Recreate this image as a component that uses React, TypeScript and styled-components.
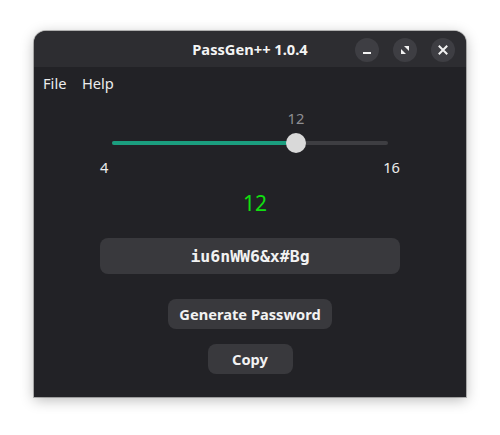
import React from "react";
import styled, { createGlobalStyle } from "styled-components";

const MIN = 4;
const MAX = 16;
const VALUE = 12;

function App() {
  const ratio = (VALUE - MIN) / (MAX - MIN);

  return (
    <>
      <GlobalStyle />
      <Page>
        <Window>
          <TitleBar>
            <Title>PassGen++ 1.0.4</Title>
            <Controls>
              <ControlButton>
                <svg width="10" height="10" viewBox="0 0 10 10">
                  <rect x="1" y="7" width="8" height="2" fill="#f2f2f2" />
                </svg>
              </ControlButton>
              <ControlButton>
                <svg width="10" height="10" viewBox="0 0 10 10">
                  <polygon points="4,1 9,1 9,6" fill="#f2f2f2" />
                  <polygon points="1,4 6,9 1,9" fill="#f2f2f2" />
                </svg>
              </ControlButton>
              <ControlButton>
                <svg width="10" height="10" viewBox="0 0 10 10">
                  <path
                    d="M1.5 1.5 L8.5 8.5 M8.5 1.5 L1.5 8.5"
                    stroke="#f2f2f2"
                    strokeWidth="2"
                    strokeLinecap="square"
                  />
                </svg>
              </ControlButton>
            </Controls>
          </TitleBar>

          <Body>
            <MenuBar>
              <MenuItem>File</MenuItem>
              <MenuItem>Help</MenuItem>
            </MenuBar>

            <SliderBlock>
              <ValueRow>
                <ValueLabel style={{ left: `${ratio * 100}%` }}>{VALUE}</ValueLabel>
              </ValueRow>
              <Track>
                <Fill style={{ width: `${ratio * 100}%` }} />
                <Thumb style={{ left: `${ratio * 100}%` }} />
              </Track>
              <RangeLabels>
                <span>{MIN}</span>
                <span>{MAX}</span>
              </RangeLabels>
            </SliderBlock>

            <LengthValue>{VALUE}</LengthValue>

            <PasswordBox>iu6nWW6&amp;x#Bg</PasswordBox>

            <Button $top={25} $width={164}>
              Generate Password
            </Button>
            <Button $top={15} $width={85}>
              Copy
            </Button>
          </Body>
        </Window>
      </Page>
    </>
  );
}

export default App;

const GlobalStyle = createGlobalStyle`
  body {
    margin: 0;
    background: #ffffff;
    font-family: "Noto Sans", "Open Sans", sans-serif;
  }
`;

const Page = styled.div`
  width: 500px;
  height: 435px;
  padding: 31px 34px 0;
  box-sizing: border-box;
`;

const Window = styled.div`
  width: 432px;
  height: 366px;
  border-radius: 12px 12px 0 0;
  overflow: hidden;
  background: #222226;
  box-shadow: 0 3px 14px rgba(0, 0, 0, 0.28), 0 0 0 1px rgba(0, 0, 0, 0.25);
  display: flex;
  flex-direction: column;
`;

const TitleBar = styled.div`
  height: 36px;
  flex-shrink: 0;
  background: #2d2d31;
  position: relative;
  display: flex;
  align-items: center;
  justify-content: center;
`;

const Title = styled.div`
  color: #f4f4f4;
  font-weight: 700;
  font-size: 14.67px;
`;

const Controls = styled.div`
  position: absolute;
  right: 11px;
  top: 7px;
  display: flex;
  gap: 14px;
`;

const ControlButton = styled.div`
  width: 24px;
  height: 24px;
  border-radius: 50%;
  background: #3e3e43;
  display: flex;
  align-items: center;
  justify-content: center;
`;

const Body = styled.div`
  flex: 1;
  display: flex;
  flex-direction: column;
  align-items: center;
`;

const MenuBar = styled.div`
  align-self: stretch;
  height: 32px;
  padding-left: 9px;
  display: flex;
  align-items: center;
  gap: 15.5px;
`;

const MenuItem = styled.span`
  color: #ececec;
  font-size: 14.67px;
`;

const SliderBlock = styled.div`
  width: 300px;
  margin-top: 11px;
  display: flex;
  flex-direction: column;
`;

const ValueRow = styled.div`
  position: relative;
  height: 17px;
  margin: 0 12px;
`;

const ValueLabel = styled.span`
  position: absolute;
  top: 0;
  transform: translateX(-50%);
  color: #8e8e92;
  font-size: 14.67px;
  line-height: 17px;
`;

const Track = styled.div`
  position: relative;
  height: 4px;
  margin: 14px 12px 8px;
  border-radius: 2px;
  background: #3e3e42;
`;

const Fill = styled.div`
  height: 100%;
  border-radius: 2px;
  background: #1b9e7f;
`;

const Thumb = styled.div`
  position: absolute;
  top: 50%;
  width: 20px;
  height: 20px;
  border-radius: 50%;
  background: #d9d9d9;
  transform: translate(-50%, -50%);
`;

const RangeLabels = styled.div`
  display: flex;
  justify-content: space-between;
  margin-top: 6px;
  color: #ececec;
  font-size: 14.67px;
  line-height: 17px;
`;

const LengthValue = styled.div`
  margin-top: 13px;
  padding-left: 10px;
  color: #10e010;
  font-size: 21px;
  line-height: 28px;
`;

const PasswordBox = styled.div`
  margin-top: 21px;
  width: 300px;
  height: 36px;
  border-radius: 8px;
  background: #39393d;
  display: flex;
  align-items: center;
  justify-content: center;
  color: #f2f2f2;
  font-family: "DejaVu Sans Mono", monospace;
  font-weight: 700;
  font-size: 16.5px;
`;

const Button = styled.div<{ $top: number; $width: number }>`
  margin-top: ${(p) => p.$top}px;
  height: 30px;
  width: ${(p) => p.$width}px;
  border-radius: 8px;
  background: #39393d;
  display: flex;
  align-items: center;
  justify-content: center;
  color: #f2f2f2;
  font-weight: 700;
  font-size: 14.67px;
`;
